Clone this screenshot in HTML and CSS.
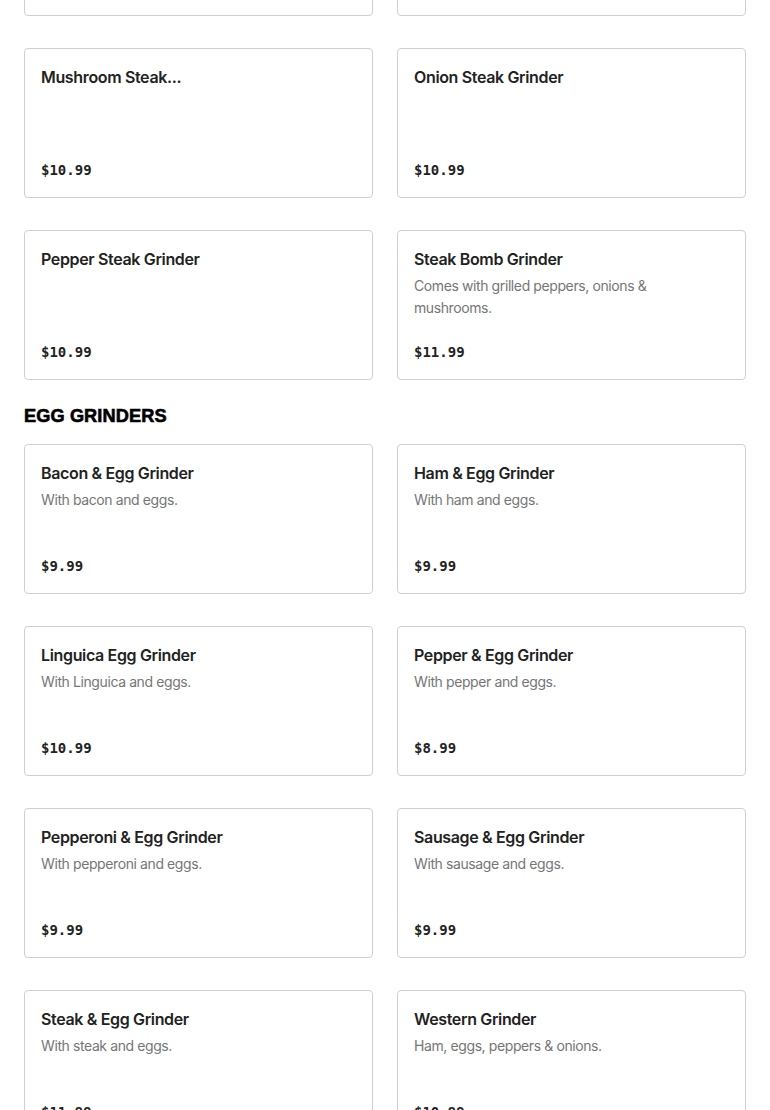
FILE: index.html
```html
<!DOCTYPE html>
<html lang="en">
<head>
<meta charset="utf-8">
<title>Menu</title>
<link rel="stylesheet" href="styles.css">
</head>
<body>
<main class="menu">
  <section class="section section--scrolled">
    <div class="grid">
      <article class="card"><h3 class="card-title">Cheese Steak Grinder</h3><p class="card-price">$10.99</p></article>
      <article class="card"><h3 class="card-title">Green Pepper Steak Grinder</h3><p class="card-price">$10.99</p></article>
      <article class="card"><h3 class="card-title">Mushroom Steak...</h3><p class="card-price">$10.99</p></article>
      <article class="card"><h3 class="card-title">Onion Steak Grinder</h3><p class="card-price">$10.99</p></article>
      <article class="card"><h3 class="card-title">Pepper Steak Grinder</h3><p class="card-price">$10.99</p></article>
      <article class="card"><h3 class="card-title">Steak Bomb Grinder</h3><p class="card-desc">Comes with grilled peppers, onions &amp; mushrooms.</p><p class="card-price">$11.99</p></article>
    </div>
  </section>
  <section class="section">
    <h2 class="section-title">EGG GRINDERS</h2>
    <div class="grid">
      <article class="card"><h3 class="card-title">Bacon &amp; Egg Grinder</h3><p class="card-desc">With bacon and eggs.</p><p class="card-price">$9.99</p></article>
      <article class="card"><h3 class="card-title">Ham &amp; Egg Grinder</h3><p class="card-desc">With ham and eggs.</p><p class="card-price">$9.99</p></article>
      <article class="card"><h3 class="card-title">Linguica Egg Grinder</h3><p class="card-desc">With Linguica and eggs.</p><p class="card-price">$10.99</p></article>
      <article class="card"><h3 class="card-title">Pepper &amp; Egg Grinder</h3><p class="card-desc">With pepper and eggs.</p><p class="card-price">$8.99</p></article>
      <article class="card"><h3 class="card-title">Pepperoni &amp; Egg Grinder</h3><p class="card-desc">With pepperoni and eggs.</p><p class="card-price">$9.99</p></article>
      <article class="card"><h3 class="card-title">Sausage &amp; Egg Grinder</h3><p class="card-desc">With sausage and eggs.</p><p class="card-price">$9.99</p></article>
      <article class="card"><h3 class="card-title">Steak &amp; Egg Grinder</h3><p class="card-desc">With steak and eggs.</p><p class="card-price">$11.99</p></article>
      <article class="card"><h3 class="card-title">Western Grinder</h3><p class="card-desc">Ham, eggs, peppers &amp; onions.</p><p class="card-price">$10.99</p></article>
    </div>
  </section>
</main>
</body>
</html>
```

FILE: styles.css
```css
* { box-sizing: border-box; }
html, body { margin: 0; padding: 0; background: #fff; }
body {
  font-family: Inter, "Liberation Sans", sans-serif;
  color: #202020;
  overflow: hidden;
}
.menu { padding: 0 24px; }
.section--scrolled { margin-top: -134px; }
.grid {
  display: grid;
  grid-template-columns: 349px 349px;
  column-gap: 24px;
  row-gap: 32px;
}
.section-title {
  margin: 24px 0 16px;
  font-family: "Liberation Sans", Arial, sans-serif;
  font-weight: 700;
  font-size: 18.2px;
  line-height: 24px;
  color: #000;
  letter-spacing: 0.1px;
  -webkit-text-stroke: 0.6px #000;
}
.card {
  display: flex;
  flex-direction: column;
  min-height: 150px;
  padding: 16px 16px 17px;
  border: 1px solid #cfcfcf;
  border-radius: 4px;
  background: #fff;
}
.card-title {
  margin: 0;
  font-size: 16px;
  font-weight: 600;
  line-height: 24px;
  letter-spacing: -0.35px;
  color: #222;
}
.card-desc {
  margin: 4px 0 0;
  max-width: 260px;
  font-size: 14px;
  line-height: 22px;
  letter-spacing: -0.4px;
  color: #767676;
}
.card-price {
  margin: auto 0 0;
  font-family: "DejaVu Sans Mono", "Liberation Mono", monospace;
  font-weight: 700;
  font-size: 14px;
  line-height: 20px;
  color: #222;
}
```
